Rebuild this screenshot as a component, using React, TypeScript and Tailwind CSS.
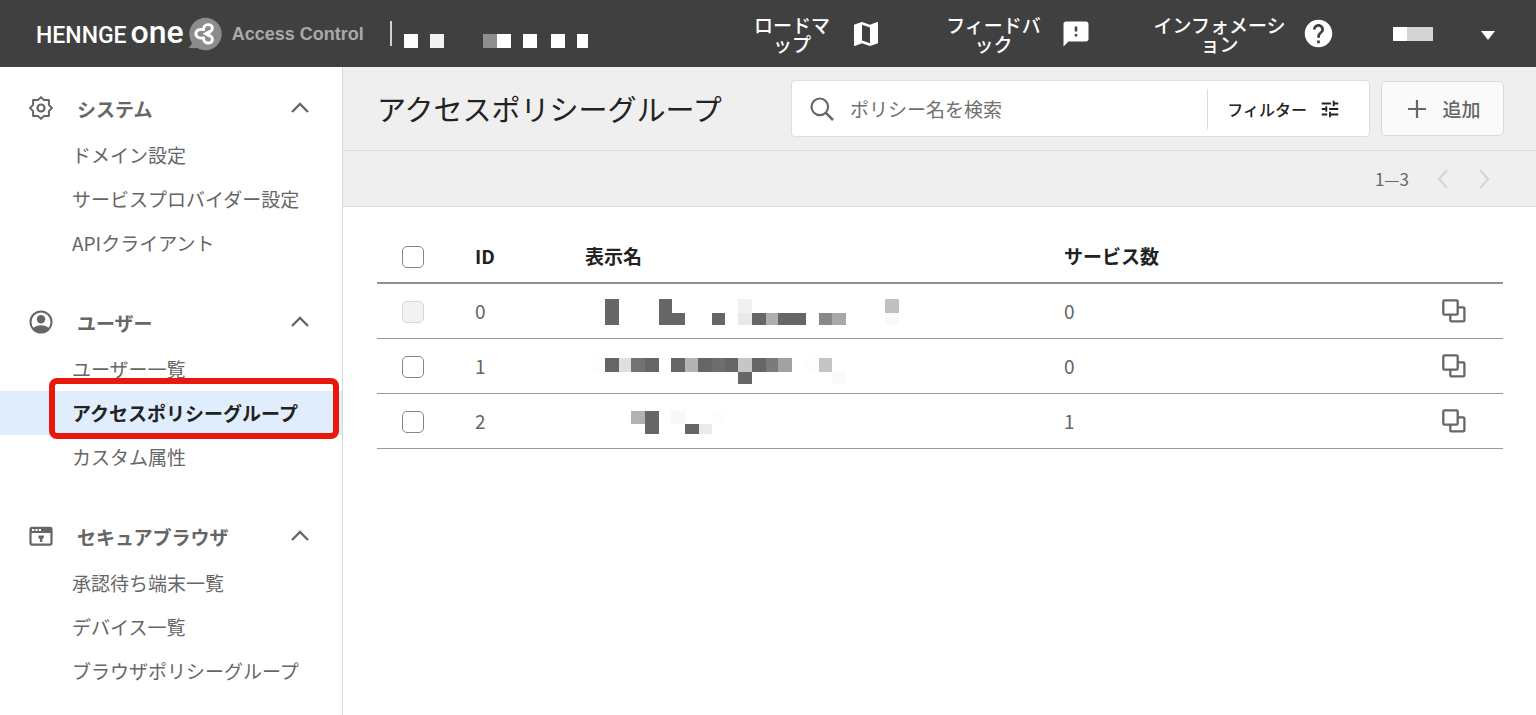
import type { ReactNode } from 'react';
import { MdFeedback, MdHelp, MdMap, MdTune } from 'react-icons/md';

type Block = [x: number, y: number, w: number, h: number, fill: string];

function Mosaic({ blocks, width, height, className }: { blocks: Block[]; width: number; height: number; className?: string }) {
  return (
    <svg width={width} height={height} viewBox={`0 0 ${width} ${height}`} className={className} shapeRendering="crispEdges" aria-hidden="true">
      {blocks.map(([x, y, w, h, fill]) => (
        <rect key={`${x}-${y}`} x={x} y={y} width={w} height={h} fill={fill} />
      ))}
    </svg>
  );
}

const tenantBlocks: Block[] = [
  [0, 0, 14, 14, '#fff'], [26, 0, 14, 14, '#f2f2f2'], [79, 0, 14, 14, '#8f8f8f'], [93, 0, 14, 14, '#fff'],
  [119, 0, 14, 14, '#fff'], [147, 0, 14, 14, '#fff'], [173, 0, 11, 14, '#fff'],
];

const accountBlocks: Block[] = [[0, 0, 14, 14, '#fff'], [14, 0, 26, 14, '#d4d4d4']];

const rows: { id: number; services: number; disabled?: boolean; blocks: Block[] }[] = [
  {
    id: 0, services: 0, disabled: true,
    blocks: [
      [20, 15, 14, 26, '#666'], [74, 15, 13, 14, '#666'], [74, 29, 26, 12, '#666'], [127, 29, 13, 12, '#666'],
      [153, 15, 14, 14, '#f1f1f1'], [153, 29, 14, 12, '#e9e9e9'], [167, 29, 14, 12, '#666'], [181, 29, 12, 12, '#aeaeae'],
      [193, 29, 28, 12, '#666'], [234, 29, 13, 12, '#888'], [247, 29, 14, 12, '#a8a8a8'],
      [300, 15, 14, 14, '#c0c0c0'], [300, 29, 14, 12, '#f9f9f9'],
    ],
  },
  {
    id: 1, services: 0,
    blocks: [
      [6, 19, 14, 14, '#fdfdfd'], [20, 19, 14, 14, '#666'], [34, 19, 12, 14, '#dfdfdf'], [46, 19, 14, 14, '#737373'],
      [60, 19, 14, 14, '#666'], [86, 19, 14, 14, '#666'], [100, 19, 13, 14, '#b3b3b3'], [113, 19, 14, 14, '#666'],
      [127, 19, 13, 14, '#6e6e6e'], [140, 19, 13, 14, '#666'], [153, 19, 14, 14, '#c6c6c6'], [167, 19, 14, 14, '#666'],
      [181, 19, 12, 14, '#7b7b7b'], [193, 19, 14, 14, '#a2a2a2'], [221, 19, 13, 14, '#fdfdfd'], [234, 19, 13, 14, '#c4c4c4'],
      [153, 33, 14, 12, '#666'], [247, 33, 14, 12, '#fafafa'],
    ],
  },
  {
    id: 2, services: 1,
    blocks: [
      [46, 17, 14, 13, '#b2b2b2'], [60, 17, 14, 23, '#666'], [86, 17, 14, 13, '#f8f8f8'], [127, 17, 13, 13, '#fdfdfd'],
      [100, 30, 14, 10, '#666'], [114, 30, 13, 10, '#eaeaea'],
    ],
  },
];

function GearIcon() {
  return (
    <svg width="26" height="26" viewBox="0 0 26 26" fill="none" stroke="currentColor" strokeWidth="2" strokeLinejoin="round" aria-hidden="true">
      <path d="M13 2.100 16.100 5.100H20.900V9.900L23.900 13 20.900 16.100V20.900H16.100L13 23.900 9.900 20.900H5.100V16.100L2.100 13 5.100 9.900V5.100H9.900z" />
      <circle cx="13" cy="13" r="3.500" strokeWidth="2.200" />
    </svg>
  );
}

function UserIcon() {
  return (
    <svg width="26" height="26" viewBox="0 0 26 26" aria-hidden="true">
      <circle cx="13" cy="13" r="10.5" fill="none" stroke="currentColor" strokeWidth="2" />
      <circle cx="13" cy="10.2" r="4.2" fill="currentColor" />
      <path d="M4.800 19.300C7 17.200 10 16.200 13 16.200s6 1 8.200 3.100A10.700 10.700 0 0 1 13 23.700a10.700 10.700 0 0 1-8.200-4.400z" fill="currentColor" />
    </svg>
  );
}

function BrowserIcon() {
  return (
    <svg width="26" height="26" viewBox="0 0 26 26" aria-hidden="true">
      <rect x="2.500" y="4.900" width="21" height="16.700" rx="1.500" fill="none" stroke="currentColor" strokeWidth="2.200" />
      <path d="M2 4.500h22v5.500H2z" fill="currentColor" />
      <path d="M4 5.900h2.200v2.200H4zM7.400 5.900h2.200v2.200H7.400zM10.800 5.900H13v2.200h-2.200z" fill="#fff" />
      <path d="M10.400 12.500h5.400V15l-1.500 1v3h-2.400v-3l-1.500-1z" fill="currentColor" />
    </svg>
  );
}

function Chevron({ d, className }: { d: string; className?: string }) {
  return (
    <svg width="20" height="20" viewBox="0 0 20 20" fill="none" stroke="currentColor" strokeWidth="2.300" className={className} aria-hidden="true">
      <path d={d} />
    </svg>
  );
}

function CopyIcon() {
  return (
    <svg width="24" height="24" viewBox="0 0 24 24" fill="none" stroke="currentColor" strokeWidth="2.300" aria-hidden="true">
      <rect x="1.300" y="1.300" width="14.400" height="14.400" rx="1.200" />
      <path d="M15.700 8.300h5.500c.7 0 1.200.5 1.200 1.200v11.700c0 .7-.5 1.200-1.200 1.200H9.500c-.7 0-1.200-.5-1.200-1.200v-5.500" />
    </svg>
  );
}

function BrandMark() {
  return (
    <svg width="34" height="34" viewBox="0 0 34 34" aria-hidden="true">
      <circle cx="17.500" cy="17" r="16.200" fill="#8c8c8c" />
      <path d="M4 25C3.800 28 2.500 29.600 0 30.200c3.500 1.400 8 1.200 11 0z" fill="#8c8c8c" />
      <g fill="none" stroke="#fff" strokeWidth="2.900" strokeLinecap="round" strokeLinejoin="round">
        <path d="M15.500 12.600C15 6.200 24.600 6.200 24.400 11.300c-.1 2.500-2.400 4-5.400 4.800" />
        <path d="M15.500 12.600C10.500 11.600 7.800 13.800 7.800 16.700s2.700 5.100 7.700 4.200" />
        <path d="M15.500 20.900C15 27.500 24.600 27.500 24.400 22.300c-.1-2.500-2.400-4.200-5.400-5" />
      </g>
      <path d="m14.500 16.700 7.500-4v8z" fill="#fff" />
    </svg>
  );
}

function NavItem({ label, icon, className, labelClassName }: { label: string; icon: ReactNode; className: string; labelClassName: string }) {
  return (
    <a href="#" className={`flex shrink-0 items-center ${className}`}>
      <span className={`text-center text-[19px] leading-[19px] font-medium break-all [line-break:anywhere] ${labelClassName}`}>{label}</span>
      {icon}
    </a>
  );
}

function Section({ icon, title, items, active }: { icon: ReactNode; title: string; items: string[]; active?: string }) {
  return (
    <section className="mb-8">
      <button type="button" className="flex h-[50px] w-full items-center pr-8 pl-7 text-left text-[19px] font-bold">
        {icon}
        <span className="ml-[23px] flex-1 pt-0.5">{title}</span>
        <Chevron d="M2 14 10 6l8 8" />
      </button>
      <ul>
        {items.map((item) =>
          item === active ? (
            <li key={item} className="relative">
              <a href="#" aria-current="page" className="flex h-11 items-center bg-[#e0edfd] pl-[72px] font-bold text-[#222]">
                {item}
              </a>
              <div className="pointer-events-none absolute -top-[13px] -bottom-1 right-[3px] left-[49px] rounded-lg border-6 border-[#e8180c]" />
            </li>
          ) : (
            <li key={item}>
              <a href="#" className="flex h-11 items-center pl-[72px]">
                {item}
              </a>
            </li>
          ),
        )}
      </ul>
    </section>
  );
}

const checkboxClass =
  'mt-0.5 block size-[22px] appearance-none rounded-[5px] border border-[#858585] bg-white checked:bg-[#666] disabled:border-[#d6d6d6] disabled:bg-[#f2f2f2]';

export default function App() {
  return (
    <div className="flex min-h-screen flex-col bg-white font-['Noto_Sans_CJK_JP','Noto_Sans',sans-serif] text-[19px] text-[#666]">
      <header className="flex h-[67px] items-center bg-[#404040] pl-[36px] text-white">
        <a href="#" aria-label="HENNGE one Access Control" className="flex items-center">
          <span className="flex items-baseline font-['Roboto',sans-serif] leading-8">
            <span className="text-[23px] font-medium">HENNGE</span>
            <span className="ml-1 text-[32px] font-medium">one</span>
          </span>
          <span className="ml-1">
            <BrandMark />
          </span>
          <span className="ml-2.5 pt-0.5 font-['Liberation_Sans',sans-serif] text-[18px] font-bold whitespace-nowrap text-[#a9a9a9]">Access Control</span>
        </a>
        <div className="ml-[26px] h-[25px] w-0.5 bg-[#d0d0d0]" />
        <Mosaic blocks={tenantBlocks} width={184} height={14} className="mt-[14px] ml-3 shrink-0" />
        <nav className="ml-auto flex items-center pr-[41px]">
          <NavItem label="ロードマップ" icon={<MdMap size={32} />} className="gap-5" labelClassName="w-[76px]" />
          <NavItem label="フィードバック" icon={<MdFeedback size={30} />} className="ml-16 gap-5" labelClassName="w-[95px]" />
          <NavItem label="インフォメーション" icon={<MdHelp size={33} />} className="ml-[62px] gap-4" labelClassName="w-[133px]" />
          <button type="button" aria-label="Account" className="ml-[58px] flex items-center gap-12">
            <Mosaic blocks={accountBlocks} width={40} height={14} />
            <svg width="14" height="9" viewBox="0 0 14 9" className="mt-1" aria-hidden="true">
              <path d="M0 0h14L7 9z" fill="#fff" />
            </svg>
          </button>
        </nav>
      </header>

      <div className="flex flex-1">
        <aside className="w-[343px] shrink-0 border-r border-[#d9d9d9] pt-4">
          <Section icon={<GearIcon />} title="システム" items={['ドメイン設定', 'サービスプロバイダー設定', 'APIクライアント']} />
          <Section
            icon={<UserIcon />}
            title="ユーザー"
            items={['ユーザー一覧', 'アクセスポリシーグループ', 'カスタム属性']}
            active="アクセスポリシーグループ"
          />
          <Section icon={<BrowserIcon />} title="セキュアブラウザ" items={['承認待ち端末一覧', 'デバイス一覧', 'ブラウザポリシーグループ']} />
        </aside>

        <main className="min-w-0 flex-1">
          <div className="flex h-[84px] items-center border-b border-[#dadada] bg-[#efefef] pr-8 pl-[34px]">
            <h1 className="flex-1 text-[29px] whitespace-nowrap text-[#222]">アクセスポリシーグループ</h1>
            <div className="flex h-[57px] w-[579px] min-w-0 items-center rounded-[4px] border border-[#dedede] bg-white pl-[18px]">
              <svg width="24" height="24" viewBox="0 0 24 24" fill="none" stroke="currentColor" strokeWidth="2.200" className="shrink-0" aria-hidden="true">
                <circle cx="9.800" cy="9.800" r="8.300" />
                <path d="m15.600 15.600 7.400 7.400" strokeWidth="2.500" />
              </svg>
              <input
                type="search"
                aria-label="ポリシー名を検索"
                placeholder="ポリシー名を検索"
                className="ml-4 min-w-0 flex-1 pt-0.5 text-[19px] outline-none placeholder:text-[#707070] placeholder:opacity-100"
              />
              <button type="button" className="flex h-10 items-center gap-3 border-l border-[#dadada] pr-[28px] pl-[19px] text-[16px] font-medium whitespace-nowrap text-[#222]">
                フィルター
                <MdTune size={22} />
              </button>
            </div>
            <button type="button" className="ml-[11px] flex h-[55px] w-[123px] items-center justify-center gap-4 rounded-[5px] border border-[#dadada] bg-[#fafafa] pl-1 font-medium whitespace-nowrap">
              <svg width="18" height="18" viewBox="0 0 18 18" stroke="currentColor" strokeWidth="2.200" aria-hidden="true">
                <path d="M9 0v18M0 9h18" />
              </svg>
              <span className="pt-0.5">追加</span>
            </button>
          </div>

          <div className="flex h-14 items-center justify-end border-b border-[#dadada] bg-[#efefef] pr-[43px]">
            <span className="mr-6 text-[17px]">1—3</span>
            <button type="button" aria-label="前へ" disabled className="text-[#d6d6d6]">
              <Chevron d="M14 1 6 10l8 9" />
            </button>
            <button type="button" aria-label="次へ" disabled className="ml-5 text-[#d6d6d6]">
              <Chevron d="m7 1 8 9-8 9" />
            </button>
          </div>

          <div className="pt-[23px] pr-[33px] pl-[34px]">
            <table className="w-full table-fixed border-separate border-spacing-0 text-left">
              <thead>
                <tr className="h-[54px] text-[#222] [&>th]:border-b-2 [&>th]:border-[#8f8f8f] [&>th]:p-0">
                  <th className="w-[98px]">
                    <input type="checkbox" aria-label="すべて選択" className={`ml-[25px] ${checkboxClass}`} />
                  </th>
                  <th className="w-[110px]">ID</th>
                  <th className="w-[479px]">表示名</th>
                  <th>サービス数</th>
                  <th className="w-[61px]" />
                </tr>
              </thead>
              <tbody>
                {rows.map((row) => (
                  <tr key={row.id} className="h-[55px] [&>td]:border-b [&>td]:border-[#999] [&>td]:p-0">
                    <td>
                      <input type="checkbox" aria-label={`${row.id}`} disabled={row.disabled} className={`ml-[25px] ${checkboxClass}`} />
                    </td>
                    <td>{row.id}</td>
                    <td>
                      <Mosaic blocks={row.blocks} width={330} height={54} />
                    </td>
                    <td>{row.services}</td>
                    <td>
                      <button type="button" aria-label="複製" className="block">
                        <CopyIcon />
                      </button>
                    </td>
                  </tr>
                ))}
              </tbody>
            </table>
          </div>
        </main>
      </div>
    </div>
  );
}
